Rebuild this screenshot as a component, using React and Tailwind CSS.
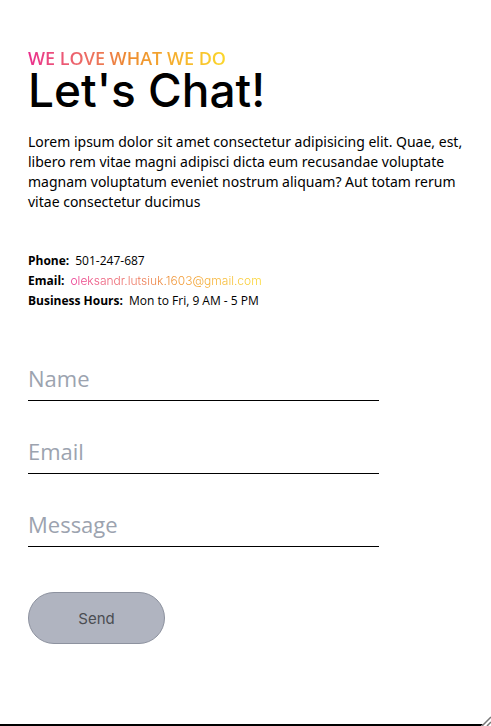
const fields = [
  { id: "name", label: "Name", type: "text" },
  { id: "email", label: "Email", type: "email" },
  { id: "message", label: "Message", type: "text" },
];

export default function App() {
  return (
    <main className="relative border-b-2 border-black bg-white px-7 pt-12 pb-20 font-['Noto_Sans','Open_Sans',sans-serif] text-black">
      <section>
        <p className="w-fit bg-linear-to-r from-[#ea2c8c] via-[#ed8a2f] to-[#fbd72b] bg-clip-text font-['Open_Sans',sans-serif] text-lg leading-5 font-semibold text-transparent">
          WE LOVE WHAT WE DO
        </p>
        <h1 className="font-[Inter,sans-serif] text-[46px] leading-11 font-medium">Let's Chat!</h1>
        <p className="mt-5 text-sm leading-5">
          Lorem ipsum dolor sit amet consectetur adipisicing elit. Quae, est, libero rem vitae magni
          adipisci dicta eum recusandae voluptate magnam voluptatum eveniet nostrum aliquam? Aut
          totam rerum vitae consectetur ducimus
        </p>
        <dl className="mt-[39px] font-['Open_Sans',sans-serif] text-xs leading-5">
          <div className="flex gap-1.5">
            <dt className="font-bold">Phone:</dt>
            <dd>501-247-687</dd>
          </div>
          <div className="flex gap-1.5">
            <dt className="font-bold">Email:</dt>
            <dd>
              <a
                href="mailto:oleksandr.lutsiuk.1603@gmail.com"
                className="bg-linear-to-r from-[#ea2c8c] via-[#ed8a2f] to-[#fbd72b] bg-clip-text font-[Inter,sans-serif] font-light text-transparent"
              >
                oleksandr.lutsiuk.1603@gmail.com
              </a>
            </dd>
          </div>
          <div className="flex gap-1.5">
            <dt className="font-bold">Business Hours:</dt>
            <dd>Mon to Fri, 9 AM - 5 PM</dd>
          </div>
        </dl>
      </section>
      <form className="mt-[45px]" onSubmit={(e) => e.preventDefault()}>
        <div className="flex max-w-[351px] flex-col gap-7">
          {fields.map((f) => (
            <input
              key={f.id}
              id={f.id}
              name={f.id}
              type={f.type}
              aria-label={f.label}
              placeholder={f.label}
              className="h-[45px] w-full border-b border-black bg-transparent font-['Open_Sans',sans-serif] text-[22px] outline-none placeholder:text-[#9ca3af]"
            />
          ))}
        </div>
        <button
          type="submit"
          className="mt-[45px] h-[52px] w-[137px] rounded-full border border-[#8d929f] bg-[#b0b4c0] pt-0.5 font-[Inter,sans-serif] text-[15px] text-[#4b4d52]"
        >
          Send
        </button>
      </form>
      <svg className="absolute right-0 -bottom-0.5 size-2.5" viewBox="0 0 10 10" aria-hidden="true">
        <path d="M0 10 10 0V10Z" fill="#fff" />
        <path d="M1 10 10 1M6 10l4-4" stroke="#777" strokeWidth="1.5" />
      </svg>
    </main>
  );
}
